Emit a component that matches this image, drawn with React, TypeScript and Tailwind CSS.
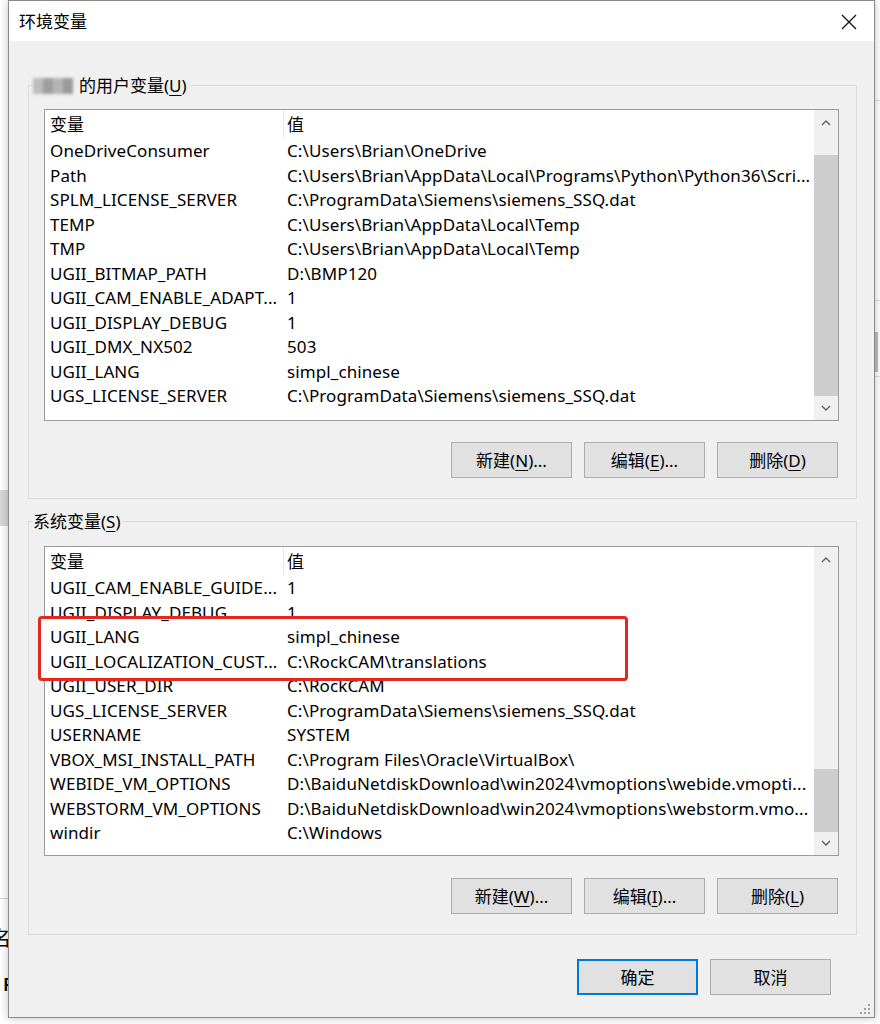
import React from "react";

const userVars: [string, string][] = [
  ["OneDriveConsumer", "C:\\Users\\Brian\\OneDrive"],
  ["Path", "C:\\Users\\Brian\\AppData\\Local\\Programs\\Python\\Python36\\Scri..."],
  ["SPLM_LICENSE_SERVER", "C:\\ProgramData\\Siemens\\siemens_SSQ.dat"],
  ["TEMP", "C:\\Users\\Brian\\AppData\\Local\\Temp"],
  ["TMP", "C:\\Users\\Brian\\AppData\\Local\\Temp"],
  ["UGII_BITMAP_PATH", "D:\\BMP120"],
  ["UGII_CAM_ENABLE_ADAPT...", "1"],
  ["UGII_DISPLAY_DEBUG", "1"],
  ["UGII_DMX_NX502", "503"],
  ["UGII_LANG", "simpl_chinese"],
  ["UGS_LICENSE_SERVER", "C:\\ProgramData\\Siemens\\siemens_SSQ.dat"],
];

const sysVars: [string, string][] = [
  ["UGII_CAM_ENABLE_GUIDE...", "1"],
  ["UGII_DISPLAY_DEBUG", "1"],
  ["UGII_LANG", "simpl_chinese"],
  ["UGII_LOCALIZATION_CUST...", "C:\\RockCAM\\translations"],
  ["UGII_USER_DIR", "C:\\RockCAM"],
  ["UGS_LICENSE_SERVER", "C:\\ProgramData\\Siemens\\siemens_SSQ.dat"],
  ["USERNAME", "SYSTEM"],
  ["VBOX_MSI_INSTALL_PATH", "C:\\Program Files\\Oracle\\VirtualBox\\"],
  ["WEBIDE_VM_OPTIONS", "D:\\BaiduNetdiskDownload\\win2024\\vmoptions\\webide.vmopti..."],
  ["WEBSTORM_VM_OPTIONS", "D:\\BaiduNetdiskDownload\\win2024\\vmoptions\\webstorm.vmo..."],
  ["windir", "C:\\Windows"],
];

function Chevron({ up }: { up?: boolean }) {
  return (
    <svg width="10" height="6" viewBox="0 0 10 6" className="block">
      <polyline
        points={up ? "1,5 5,1 9,5" : "1,1 5,5 9,1"}
        fill="none"
        stroke="#606060"
        strokeWidth="1.4"
      />
    </svg>
  );
}

function VarList({ rows, height, thumbTop, thumbHeight }: { rows: [string, string][]; height: string; thumbTop: string; thumbHeight: string }) {
  return (
    <div className={`ml-[15px] mr-[17px] flex border border-[#9a9a9a] bg-white ${height}`}>
      <div className="flex-1 overflow-hidden">
        <div className="flex h-[28px] items-center">
          <div className="w-[238px] pl-[5px] pt-[2px]">变量</div>
          <div className="h-full w-px bg-[#e5e5e5]" />
          <div className="pl-[3px] pt-[2px]">值</div>
        </div>
        {rows.map(([k, v]) => (
          <div key={k} className="flex h-[24.5px] items-center whitespace-nowrap pt-[2px] tracking-[0.1px]">
            <div className="w-[239px] overflow-hidden pl-[5px]">{k}</div>
            <div className="pl-[3px]">{v}</div>
          </div>
        ))}
      </div>
      <div className="flex w-[24px] flex-col bg-[#f0f0f0]">
        <div className="flex h-[25px] items-center justify-center">
          <Chevron up />
        </div>
        <div className="relative flex-1">
          <div className={`absolute left-0 right-0 bg-[#cdcdcd] ${thumbTop} ${thumbHeight}`} />
        </div>
        <div className="flex h-[25px] items-center justify-center">
          <Chevron />
        </div>
      </div>
    </div>
  );
}

function Btn({ label, mn, tail, primary }: { label: string; mn?: string; tail?: string; primary?: boolean }) {
  return (
    <button
      className={`flex h-[36px] w-[121px] items-center justify-center bg-[#e1e1e1] pt-[1px] ${primary ? "border-2 border-[#0078d7]" : "border border-[#adadad]"}`}
    >
      {label}
      {mn && (
        <>
          (<span className="underline underline-offset-[3px]">{mn}</span>){tail}
        </>
      )}
    </button>
  );
}

export default function App() {
  return (
    <div
      className="relative h-[1024px] w-[880px] overflow-hidden bg-white text-[17px] leading-[22px] text-black"
      style={{ fontFamily: '"Noto Sans", "Noto Sans CJK SC", sans-serif' }}
    >
      {/* desktop behind the dialog */}
      <div className="absolute left-0 top-[490px] h-[36px] w-[10px] bg-[#d6d6d6]" />
      <div className="absolute left-0 top-[898px] h-px w-[10px] bg-[#cfcfcf]" />
      <div className="absolute left-[-9px] top-[928px] text-[20px]">名</div>
      <div className="absolute left-[3px] top-[973px] text-[18px] font-semibold">F</div>
      <div className="absolute right-0 top-[100px] h-px w-[8px] bg-[#dedede]" />
      <div className="absolute right-0 top-[300px] h-px w-[8px] bg-[#dedede]" />
      <div className="absolute right-[2px] top-[332px] h-[40px] w-[3px] bg-[#bdbdbd]" />
      <div className="absolute right-0 top-[376px] h-px w-[8px] bg-[#dedede]" />

      {/* dialog window */}
      <div className="absolute left-[8px] top-0 flex h-[1018px] w-[867px] flex-col border border-[#8a8a8a] bg-[#f0f0f0] shadow-[0_0_8px_rgba(0,0,0,0.25)]">
        <div className="relative flex h-[40px] shrink-0 items-center bg-white pl-[10px] pt-[2px]">
          <span>环境变量</span>
          <svg width="16" height="16" viewBox="0 0 16 16" className="absolute right-[17px] top-[13px]">
            <path d="M1 1 L15 15 M15 1 L1 15" stroke="#111" strokeWidth="1.3" />
          </svg>
        </div>

        <div className="flex flex-1 flex-col pl-[19px] pr-[17px]">
          {/* user variables */}
          <div className="relative mt-[44px] border border-[#dcdcdc] pb-[20px] pt-[23px]">
            <div className="absolute left-[4px] top-[-11px] flex items-center bg-[#f0f0f0] pr-[2px]">
              <div className="mr-[6px] flex h-[16px] w-[40px] blur-[1.5px]">
                <div className="h-full w-[10px] bg-[#bdbdbd]" />
                <div className="h-full w-[10px] bg-[#9e9e9e]" />
                <div className="h-full w-[10px] bg-[#b5b5b5]" />
                <div className="h-full w-[10px] bg-[#9a9a9a]" />
              </div>
              <span>
                的用户变量(<span className="underline underline-offset-[3px]">U</span>)
              </span>
            </div>
            <VarList rows={userVars} height="h-[312px]" thumbTop="top-[20px]" thumbHeight="h-[241px]" />
            <div className="mr-[18px] mt-[21px] flex justify-end gap-[12px]">
              <Btn label="新建" mn="N" tail="..." />
              <Btn label="编辑" mn="E" tail="..." />
              <Btn label="删除" mn="D" />
            </div>
          </div>

          {/* system variables */}
          <div className="relative mt-[22px] border border-[#dcdcdc] pb-[20px] pt-[24px]">
            <div className="absolute left-[4px] top-[-11px] bg-[#f0f0f0] pr-[2px]">
              系统变量(<span className="underline underline-offset-[3px]">S</span>)
            </div>
            <VarList rows={sysVars} height="h-[310px]" thumbTop="top-[197px]" thumbHeight="h-[63px]" />
            <div className="mr-[18px] mt-[22px] flex justify-end gap-[12px]">
              <Btn label="新建" mn="W" tail="..." />
              <Btn label="编辑" mn="I" tail="..." />
              <Btn label="删除" mn="L" />
            </div>
          </div>

          <div className="mr-[26px] mt-[24px] flex justify-end gap-[12px]">
            <Btn label="确定" primary />
            <Btn label="取消" />
          </div>
        </div>

        {/* size grip */}
        <svg width="10" height="10" viewBox="0 0 10 10" className="absolute bottom-[3px] right-[4px]">
          <g fill="#a0a0a0">
            <rect x="8" y="0" width="2" height="2" />
            <rect x="4" y="4" width="2" height="2" />
            <rect x="8" y="4" width="2" height="2" />
            <rect x="0" y="8" width="2" height="2" />
            <rect x="4" y="8" width="2" height="2" />
            <rect x="8" y="8" width="2" height="2" />
          </g>
        </svg>
      </div>

      {/* highlight box */}
      <div className="absolute left-[38px] top-[616px] h-[65px] w-[590px] rounded-[4px] border-[3px] border-[#e3291f]">
        <div className="absolute bottom-0 left-0 top-0 w-[4px] bg-white" />
      </div>
    </div>
  );
}
